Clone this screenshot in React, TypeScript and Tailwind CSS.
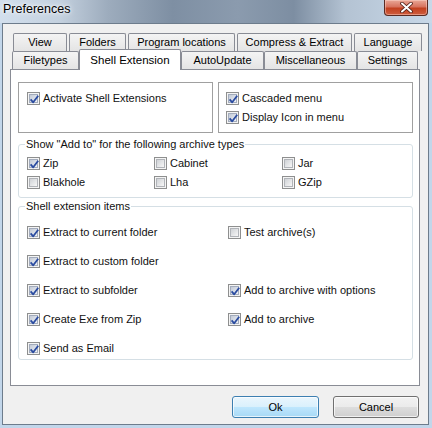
import { ReactNode } from "react";

interface TabProps {
  label: string;
  width: string;
  active?: boolean;
}

function Tab({ label, width, active = false }: TabProps) {
  if (active) {
    return (
      <div
        className={`relative z-10 -mt-[2px] h-[21px] ${width} flex items-start justify-center pt-[2px] border border-b-0 border-[#898c95] rounded-t-[2px] bg-white text-[11.5px]`}
      >
        {label}
      </div>
    );
  }
  return (
    <div
      className={`h-[18px] ${width} flex items-center justify-center border border-b-0 border-[#898c95] rounded-t-[2px] bg-[linear-gradient(#f4f4f4,#e4e4e4)] text-[11px] leading-none`}
    >
      {label}
    </div>
  );
}

function CheckBox({ checked = false }: { checked?: boolean }) {
  return (
    <span className="relative w-[13px] h-[13px] shrink-0 border border-[#8e8f8f] bg-[#f4f4f4] p-[1px]">
      <span
        className={`block w-full h-full border ${
          checked
            ? "border-[#a3acbd] bg-[linear-gradient(135deg,#c3cad6,#eef1f6)]"
            : "border-[#b1b4b9] bg-[linear-gradient(135deg,#cfd2d6,#f7f7f7)]"
        }`}
      />
      {checked && (
        <svg
          className="absolute left-0 top-0"
          width="13"
          height="13"
          viewBox="0 0 13 13"
        >
          <path
            d="M2.6 6.4 L5.2 9.3 L10.2 2.8"
            fill="none"
            stroke="#2a4ba0"
            strokeWidth="1.8"
            strokeLinejoin="round"
          />
        </svg>
      )}
    </span>
  );
}

function Option({ label, checked }: { label: string; checked?: boolean }) {
  return (
    <div className="flex items-center h-[13px]">
      <CheckBox checked={checked} />
      <span className="ml-[3px] text-[11px] leading-none whitespace-nowrap text-[#111]">{label}</span>
    </div>
  );
}

function Group({ title, className = "", children }: { title: string; className?: string; children: ReactNode }) {
  return (
    <fieldset className={`ml-[7px] w-[395px] border border-[#d5dfe5] rounded-[3px] pl-[6px] ${className}`}>
      <legend className="px-[1px] text-[11px] leading-[13px] text-[#111]">{title}</legend>
      <div className="pl-[2px]">{children}</div>
    </fieldset>
  );
}

export default function App() {
  return (
    <div className="w-[432px] h-[428px] flex flex-col bg-[#c2d6ea] overflow-hidden text-black font-['Liberation_Sans',Arial,sans-serif]">
      {/* Title bar */}
      <div className="relative h-[23px] shrink-0 pl-[3px] pt-[2px] bg-[linear-gradient(90deg,#d2dfed_0%,#c3d0de_14%,#9dacbd_25%,#7e8fa3_40%,#8b9bae_55%,#7d8ea2_68%,#b4c3d3_80%,#c8d8e8_100%)]">
        <div className="text-[12.5px] leading-[15px] [text-shadow:0_0_6px_#ffffff,0_0_3px_#ffffff]">Preferences</div>
        <div className="absolute top-0 right-[4px] w-[44px] h-[16px] flex items-center justify-center border border-t-0 border-[#5a2a22] rounded-b-[4px] bg-[linear-gradient(#e9a897,#d7735e_45%,#c2401f_55%,#cf5e3f)] shadow-[inset_0_0_0_1px_rgba(255,220,210,0.45)]">
          <svg width="13" height="11" viewBox="0 0 13 11">
            <path d="M2 1.5 L11 9.5 M11 1.5 L2 9.5" stroke="#4a1a12" strokeWidth="3.6" strokeLinecap="round" />
            <path d="M2 1.5 L11 9.5 M11 1.5 L2 9.5" stroke="#ffffff" strokeWidth="2" strokeLinecap="round" />
          </svg>
        </div>
      </div>

      {/* Client area */}
      <div className="ml-[2px] mr-[3px] mb-[3px] flex-1 flex flex-col border border-[#6d7c8c] bg-[#f0f0f0] pt-[9px] pl-[7px]">
        {/* Tab rows */}
        <div className="flex gap-[2px] pl-[3px]">
          <Tab label="View" width="w-[54px]" />
          <Tab label="Folders" width="w-[57px]" />
          <Tab label="Program locations" width="w-[107px]" />
          <Tab label="Compress & Extract" width="w-[115px]" />
          <Tab label="Language" width="w-[68px]" />
        </div>
        <div className="flex items-start h-[18px] pl-[2px]">
          <Tab label="Filetypes" width="w-[67px]" />
          <Tab label="Shell Extension" width="w-[102px]" active />
          <Tab label="AutoUpdate" width="w-[83px]" />
          <Tab label="Miscellaneous" width="w-[93px]" />
          <Tab label="Settings" width="w-[61px]" />
        </div>

        {/* Tab panel */}
        <div className="w-[410px] h-[317px] shrink-0 border border-[#898c95] bg-white">
          <div className="mt-[12px] ml-[7px] flex gap-[5px]">
            <div className="w-[195px] h-[51px] border border-[#a0a0a0] pl-[8px] pt-[9px]">
              <Option label="Activate Shell Extensions" checked />
            </div>
            <div className="w-[195px] h-[51px] border border-[#a0a0a0] pl-[7px] pt-[9px] flex flex-col gap-[6px]">
              <Option label="Cascaded menu" checked />
              <Option label="Display Icon in menu" checked />
            </div>
          </div>

          <Group title={'Show "Add to" for the following archive types'} className="mt-[5px] pb-[8px]">
            <div className="mt-[6px] grid grid-cols-[127px_128px_1fr] gap-y-[6px]">
              <Option label="Zip" checked />
              <Option label="Cabinet" />
              <Option label="Jar" />
              <Option label="Blakhole" />
              <Option label="Lha" />
              <Option label="GZip" />
            </div>
          </Group>

          <Group title="Shell extension items" className="mt-[2px] pb-[4px]">
            <div className="mt-[13px] grid grid-cols-[201px_1fr] gap-y-[16px]">
              <Option label="Extract to current folder" checked />
              <Option label="Test archive(s)" />
              <Option label="Extract to custom folder" checked />
              <div />
              <Option label="Extract to subfolder" checked />
              <Option label="Add to archive with options" checked />
              <Option label="Create Exe from Zip" checked />
              <Option label="Add to archive" checked />
              <Option label="Send as Email" checked />
              <div />
            </div>
          </Group>
        </div>

        {/* Buttons */}
        <div className="mt-[10px] pr-[9px] flex justify-end gap-[14px]">
          <button className="w-[87px] h-[22px] border border-[#3c7fb1] rounded-[3px] bg-[linear-gradient(#eaf6fd_0%,#d9f0fc_50%,#bee6fd_51%,#a7d9f5_100%)] shadow-[inset_0_0_0_1px_rgba(255,255,255,0.7)] text-[11px] leading-none">
            Ok
          </button>
          <button className="w-[86px] h-[22px] border border-[#707070] rounded-[3px] bg-[linear-gradient(#f2f2f2_0%,#ebebeb_50%,#dddddd_51%,#cfcfcf_100%)] shadow-[inset_0_0_0_1px_rgba(255,255,255,0.7)] text-[11px] leading-none">
            Cancel
          </button>
        </div>
      </div>
    </div>
  );
}
